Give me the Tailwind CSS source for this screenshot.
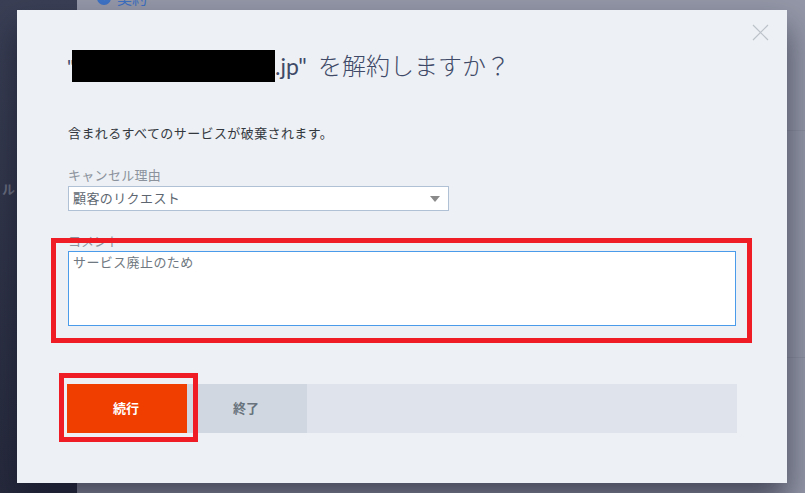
<!DOCTYPE html>
<html lang="ja">
<head>
    <meta charset="UTF-8">
    <title>解約</title>
    <script src="https://cdn.jsdelivr.net/npm/@tailwindcss/browser@4"></script>
</head>
<body class="bg-[#9397a7] font-['Lato','Noto_Sans_CJK_JP',sans-serif] text-[13px] text-[#33475b]">
    <div class="relative w-[805px] h-[493px] overflow-hidden flex">
        <!-- page behind the dialog -->
        <aside class="w-[77px] bg-gradient-to-b from-[#3a3f55] to-[#262a3c] text-[#6b7080] pt-[180px] font-bold text-[13px] text-right pr-[62px]">ル</aside>
        <main class="flex-1 pl-[20px] -mt-[11px]">
            <div class="flex items-center gap-[6px] text-[#3d6fc0] text-[15px] leading-[18px]">
                <svg width="14" height="14" viewBox="0 0 14 14"><circle cx="7" cy="7" r="7" fill="#3d72c4"/><path d="M4 5l3 3 4-5" fill="none" stroke="#fff" stroke-width="1.6"/></svg>契約
            </div>
            <div class="mt-[123px] border-t border-[#8a8e9e]"></div>
            <div class="mt-[226px] border-t border-[#8a8e9e]"></div>
        </main>

        <!-- dialog -->
        <div class="absolute left-[17px] top-[10px] w-[770px] h-[473px] bg-[#edf0f4] shadow-[0_18px_30px_rgba(20,22,40,0.6)] pl-[51px] pr-[50px] pt-[40px]">
            <button class="absolute right-[17px] top-[14px] text-[#bcc2c9]">
                <svg width="18" height="18" viewBox="0 0 18 18" fill="none" stroke="currentColor" stroke-width="1.2"><path d="M1 1l15 15M16 1L1 16"/></svg>
            </button>

            <h1 class="flex items-center h-[32px] text-[24px] font-light text-[#3f4a68] leading-[32px]">
                <span class="w-[4px] -ml-[1px] mr-[1px] text-[20px] font-normal">"</span><span class="w-[203px] h-[32px] bg-black"></span><span class="font-normal text-[23px]">.jp"</span><span class="ml-[11px]">を解約しますか？</span>
            </h1>

            <p class="mt-[41px] text-[#33383f] leading-[20px] tracking-[0.4px]">含まれるすべてのサービスが破棄されます。</p>

            <label class="block mt-[23px] text-[#8b929c] leading-[18px] tracking-[0.3px]">キャンセル理由</label>
            <div class="mt-[2px] w-[381px] h-[25px] bg-white border border-[#b0c1d6] flex items-center justify-between pl-[4px] pr-[8px] text-[#5d6670] tracking-[0.4px]">
                <span>顧客のリクエスト</span>
                <span class="w-0 h-0 border-x-[5px] border-x-transparent border-t-[6px] border-t-[#8a8a8a]"></span>
            </div>

            <label class="block mt-[20px] text-[#8b929c] leading-[20px]">コメント</label>
            <textarea class="block w-[668px] h-[75px] bg-white border border-[#4a9bea] px-[4px] py-0 text-[#6f7881] leading-[20px] tracking-[0.4px] resize-none outline-none">サービス廃止のため</textarea>

            <div class="mt-[58px] ml-[-1px] w-[670px] h-[49px] bg-[#dfe3eb] flex text-[13px] font-bold">
                <button class="w-[120px] bg-[#ef3e00] text-white pr-[2px]">続行</button>
                <button class="w-[120px] bg-[#d0d7e0] text-[#68737d] pr-[2px]">終了</button>
            </div>
        </div>

        <!-- red annotations -->
        <div class="absolute left-[51px] top-[238px] w-[701px] h-[105px] border-[5px] border-[#ef1c25]"></div>
        <div class="absolute left-[59px] top-[373px] w-[139px] h-[69px] border-[5px] border-[#ef1c25]"></div>
    </div>
</body>
</html>
